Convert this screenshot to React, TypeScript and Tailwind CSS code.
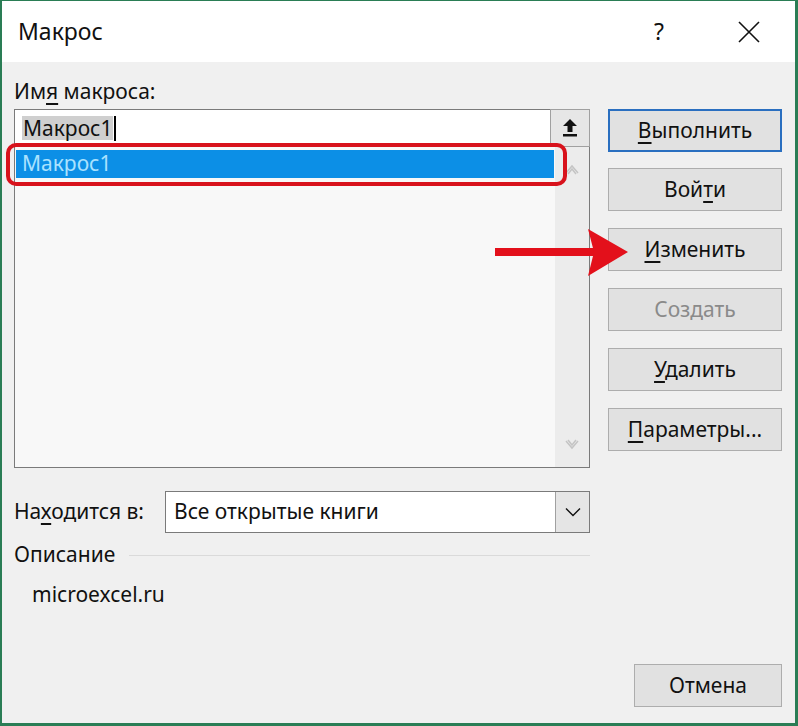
import React from "react";

const F = { fontFamily: "'Noto Sans', 'Open Sans', sans-serif" };

function Btn({ children, primary, disabled, className = "" }: { children: React.ReactNode; primary?: boolean; disabled?: boolean; className?: string }) {
  return (
    <div
      className={
        "h-[43px] flex items-center justify-center bg-[#e1e1e1] text-[21px] " +
        (primary ? "border-2 border-[#2a6fc0] " : "border border-[#adadad] ") +
        (disabled ? "text-[#8a8a8a] " : "text-[#111] ") +
        className
      }
    >
      {children}
    </div>
  );
}

export default function App() {
  return (
    <div style={F} className="w-[798px] h-[726px] relative flex flex-col border-l-2 border-r-[3px] border-t border-b-[3px] border-[#2a7d55] bg-[#f0f0f0] text-[#111] overflow-hidden">
      {/* Title bar */}
      <div className="h-[61px] bg-white flex items-center pl-[16px] shrink-0">
        <div className="text-[23px] mt-[-1px]">Макрос</div>
        <div className="ml-auto text-[23px] w-[20px] mr-[64px] mt-[-1px]">?</div>
        <svg width="22" height="22" viewBox="0 0 22 22" className="mr-[35px]">
          <path d="M1 1 L21 21 M21 1 L1 21" stroke="#111" strokeWidth="1.6" />
        </svg>
      </div>

      {/* Body */}
      <div className="flex-1 flex pl-[12px]">
        <div className="w-[576px] flex flex-col">
          <div className="text-[21px] mt-[15px] leading-[29px]">
            Им<span className="underline underline-offset-[4px]">я</span> макроса:
          </div>
          <div className="flex mt-[3px] h-[38px]">
            <div className="flex-1 bg-white border border-[#7a7a7a] border-r-0 flex items-center pl-[7px]">
              <span className="bg-[#cfcfcf] text-[21px] leading-[24px] px-[1px]">Макрос1</span>
              <span className="w-[1.5px] h-[25px] bg-black ml-[1px]" />
            </div>
            <div className="w-[40px] bg-[#e6e6e6] border border-[#a0a0a0] flex items-center justify-center">
              <svg width="18" height="20" viewBox="0 0 18 20">
                <path d="M9 1 L2 8 H6.5 V14 H11.5 V8 H16 Z" fill="#111" />
                <rect x="2" y="16" width="14" height="2.5" fill="#111" />
              </svg>
            </div>
          </div>
          <div className="h-[321px] bg-[#f8f8f8] border border-[#7a7a7a] border-t-0 flex">
            <div className="flex-1 pt-[3px] pl-[1px] pr-[1px]">
              <div className="h-[28px] bg-[#0c8fe6] flex items-center pl-[6px] text-[21px] text-[#a9e2ff]">Макрос1</div>
            </div>
            <div className="w-[34px] bg-[#ececec] flex flex-col items-center justify-between py-[16px]">
              <svg width="14" height="12" viewBox="0 0 14 12">
                <path d="M1 10 L7 3 L13 10 M3 11 L7 6 L11 11" fill="none" stroke="#c4c4c4" strokeWidth="1.5" />
              </svg>
              <svg width="14" height="12" viewBox="0 0 14 12">
                <path d="M1 2 L7 9 L13 2 M3 1 L7 6 L11 1" fill="none" stroke="#c4c4c4" strokeWidth="1.5" />
              </svg>
            </div>
          </div>

          <div className="flex items-center mt-[23px] h-[42px]">
            <div className="text-[21px] w-[151px]">
              На<span className="underline underline-offset-[4px]">х</span>одится в:
            </div>
            <div className="flex-1 h-full flex bg-white border border-[#7a7a7a]">
              <div className="flex-1 flex items-center pl-[8px] text-[21px]">Все открытые книги</div>
              <div className="w-[34px] bg-[#e5e5e5] border-l border-[#a0a0a0] flex items-center justify-center">
                <svg width="16" height="10" viewBox="0 0 16 10">
                  <path d="M1 1.5 L8 8.5 L15 1.5" fill="none" stroke="#111" strokeWidth="1.4" />
                </svg>
              </div>
            </div>
          </div>

          <div className="flex items-center mt-[6px] h-[32px]">
            <div className="text-[21px]">Описание</div>
            <div className="flex-1 h-px bg-[#dadada] ml-[14px]" />
          </div>
          <div className="text-[21px] pl-[18px] mt-[8px]">microexcel.ru</div>
        </div>

        <div className="w-[174px] ml-[18px] flex flex-col pt-[47px]">
          <Btn primary>
            <span><span className="underline underline-offset-[4px]">В</span>ыполнить</span>
          </Btn>
          <Btn className="mt-[16px]">
            <span>Вой<span className="underline underline-offset-[4px]">т</span>и</span>
          </Btn>
          <Btn className="mt-[17px]">
            <span><span className="underline underline-offset-[4px]">И</span>зменить</span>
          </Btn>
          <Btn className="mt-[17px]" disabled>
            Создать
          </Btn>
          <Btn className="mt-[17px]">
            <span><span className="underline underline-offset-[4px]">У</span>далить</span>
          </Btn>
          <Btn className="mt-[17px]">
            <span><span className="underline underline-offset-[4px]">П</span>араметры...</span>
          </Btn>
          <div className="flex-1" />
          <div className="flex justify-end mb-[16px]">
            <Btn className="w-[148px]">Отмена</Btn>
          </div>
        </div>
      </div>

      {/* Annotations */}
      <div className="absolute left-[4px] top-[142px] w-[561px] h-[43px] border-[4px] border-[#d8121c] rounded-[10px]" />
      <svg className="absolute left-[492px] top-[226px]" width="140" height="52" viewBox="0 0 140 52">
        <rect x="1" y="21" width="100" height="8" fill="#e3101b" />
        <path d="M94 2 L134 25 L94 49 L100 25 Z" fill="#e3101b" />
      </svg>
    </div>
  );
}
